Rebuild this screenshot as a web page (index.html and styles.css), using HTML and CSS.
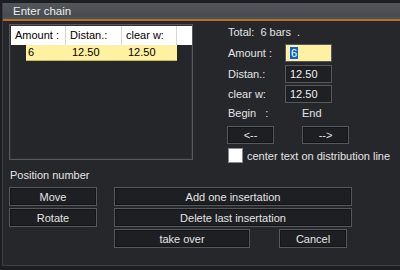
FILE: index.html
```html
<!DOCTYPE html>
<html lang="en">
<head>
    <meta charset="UTF-8">
    <title>Enter chain</title>
    <link rel="stylesheet" href="styles.css">
</head>
<body>
    <div class="window">
        <div class="titlebar">Enter chain</div>
        <div class="content">
            <div class="top">
                <div class="list">
                    <div class="list-head">
                        <span class="col col-amount">Amount :</span>
                        <span class="col col-dist">Distan.:</span>
                        <span class="col col-clear">clear w:</span>
                        <span class="col col-rest"></span>
                    </div>
                    <div class="list-row">
                        <span class="row-head"></span>
                        <span class="cell cell-amount">6</span>
                        <span class="cell cell-dist">12.50</span>
                        <span class="cell cell-clear">12.50</span>
                    </div>
                </div>

                <div class="params">
                    <div class="total">Total:&nbsp; 6 bars &nbsp;.</div>
                    <div class="fields">
                        <div class="field">
                            <span class="field-label">Amount :</span>
                            <span class="input input-active"><span class="selected">6</span></span>
                        </div>
                        <div class="field">
                            <span class="field-label">Distan.:</span>
                            <span class="input">12.50</span>
                        </div>
                        <div class="field">
                            <span class="field-label">clear w:</span>
                            <span class="input">12.50</span>
                        </div>
                    </div>
                    <div class="ends">
                        <span class="end-label">Begin &nbsp; :</span>
                        <span>End</span>
                    </div>
                    <div class="arrows">
                        <button class="btn btn-arrow">&lt;--</button>
                        <button class="btn btn-arrow">--&gt;</button>
                    </div>
                    <div class="check">
                        <span class="check-box"></span>
                        <span>center text on distribution line</span>
                    </div>
                </div>
            </div>

            <div class="pos-title">Position number</div>
            <div class="bottom">
                <div class="pos-buttons">
                    <button class="btn">Move</button>
                    <button class="btn">Rotate</button>
                </div>
                <div class="main-buttons">
                    <button class="btn">Add one insertation</button>
                    <button class="btn">Delete last insertation</button>
                    <div class="final-row">
                        <button class="btn btn-take">take over</button>
                        <button class="btn btn-cancel">Cancel</button>
                    </div>
                </div>
            </div>
        </div>
    </div>
</body>
</html>
```

FILE: styles.css
```css
body {
    margin: 0;
    background: #1d1e21;
    font-family: "Liberation Sans", Arial, sans-serif;
    font-size: 11px;
    color: #e4e4e4;
}

.window {
    margin: 3px 0 0 2px;
    height: 262px;
    background: #26272b;
    border-left: 1px solid #3e4044;
    border-bottom: 1px solid #3e4044;
}

.titlebar {
    height: 16px;
    line-height: 16px;
    padding-left: 10px;
    font-size: 11.5px;
    color: #ececec;
    background: linear-gradient(#53565b, #484b50 80%, #3f5a5e);
    border-bottom: 2px solid #c56a26;
}

.content {
    padding: 0 6px;
}

.top {
    display: flex;
    align-items: flex-start;
    gap: 34px;
    height: 142px;
}

/* list of insertations */
.list {
    margin-top: 3px;
    width: 181px;
    height: 133px;
    background: #25262a;
    border: 1px solid #55575b;
    box-shadow: inset 0 0 0 1px #303135;
    padding: 1px 0 0 1px;
}

.list-head {
    display: flex;
    height: 19px;
    line-height: 19px;
    background: #fff;
    color: #000;
}

.col {
    padding-left: 4px;
    border-right: 1px solid #d8d8d8;
}

.col-amount { width: 50px; }
.col-dist { width: 51px; }
.col-clear { width: 50px; }
.col-rest { width: 10px; border-right: none; }

.list-row {
    display: flex;
    height: 16px;
    line-height: 15px;
    color: #000;
}

.row-head {
    width: 15px;
}

.cell {
    background: #fff1a2;
    border-bottom: 1px solid #c9b66a;
    padding-left: 2px;
}

.cell-amount { width: 38px; }
.cell-dist { width: 50px; padding-left: 6px; }
.cell-clear { width: 49px; padding-left: 6px; }

/* right side */
.params {
    padding-top: 4px;
    display: flex;
    flex-direction: column;
}

.total {
    height: 14px;
    line-height: 14px;
    padding-left: 1px;
}

.fields {
    margin-top: 5px;
    display: flex;
    flex-direction: column;
    gap: 2.5px;
}

.field {
    display: flex;
    align-items: center;
    height: 18px;
}

.field-label {
    width: 57px;
    padding-left: 1px;
}

.input {
    box-sizing: border-box;
    width: 47px;
    height: 18px;
    line-height: 16px;
    padding-left: 4px;
    border: 1px solid #55575b;
    background: #1f2023;
    color: #f0f0f0;
}

.input-active {
    background: #fff1a2;
    color: #000;
}

.selected {
    background: #0a64d0;
    color: #fff;
    padding: 0 1px;
}

.ends {
    display: flex;
    margin-top: 3px;
    height: 14px;
    line-height: 14px;
    padding-left: 1px;
}

.end-label {
    width: 74px;
}

.arrows {
    display: flex;
    gap: 28px;
    margin-top: 6px;
}

.check {
    display: flex;
    align-items: center;
    gap: 4px;
    margin-top: 4px;
    padding-left: 1px;
    height: 15px;
}

.check-box {
    box-sizing: border-box;
    width: 15px;
    height: 15px;
    background: #fff;
    border: 1px solid #8a8c90;
}

/* buttons */
.btn {
    box-sizing: border-box;
    height: 19px;
    padding: 0;
    font-family: inherit;
    font-size: 11px;
    color: #e4e4e4;
    background: #1e1f22;
    border: 1px solid #56585c;
    box-shadow: inset 0 0 0 1px #141517;
}

.btn-arrow {
    width: 47px;
    height: 18px;
}

.pos-title {
    margin-top: 5px;
    height: 14px;
    line-height: 14px;
    padding-left: 1px;
}

.bottom {
    display: flex;
    gap: 17px;
    margin-top: 5px;
}

.pos-buttons {
    display: flex;
    flex-direction: column;
    gap: 2px;
    width: 88px;
}

.main-buttons {
    display: flex;
    flex-direction: column;
    gap: 2px;
    width: 238px;
}

.final-row {
    display: flex;
    gap: 29px;
}

.btn-take { width: 136px; }
.btn-cancel { width: 68px; }
```
